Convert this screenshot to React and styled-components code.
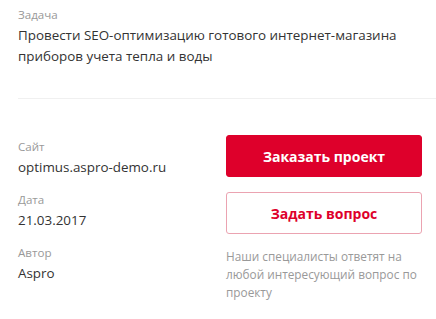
import React from 'react';
import styled, { createGlobalStyle } from 'styled-components';

const GlobalStyle = createGlobalStyle`
  body {
    margin: 0;
    background: #fff;
    font-family: "Open Sans", "Liberation Sans", sans-serif;
    color: #333;
  }
`;

const Wrapper = styled.div`
  width: 436px;
  padding: 6px 0 0 18px;
  box-sizing: border-box;
`;

const TaskBlock = styled.div`
  padding-bottom: 31px;
  border-bottom: 1px solid #f0f0f0;
`;

const Label = styled.div`
  font-size: 11.6px;
  line-height: 17px;
  color: #999;
`;

const Title = styled.div`
  font-size: 13.4px;
  line-height: 21px;
  color: #333;
  margin-top: 2px;
`;

const Details = styled.div`
  display: grid;
  grid-template-columns: 208px 196px;
  padding-top: 36px;
`;

const InfoList = styled.div`
  display: flex;
  flex-direction: column;
  gap: 13px;
  padding-top: 3px;
`;

const Value = styled.div`
  font-size: 13.4px;
  line-height: 21px;
  color: #333;
  margin-top: 2px;
`;

const Actions = styled.div`
  display: flex;
  flex-direction: column;
  gap: 15px;
`;

const Button = styled.button`
  height: 42px;
  border-radius: 3px;
  font-family: "Open Sans", "Liberation Sans", sans-serif;
  font-size: 14px;
  font-weight: 700;
  cursor: pointer;
  background: ${p => (p.$outline ? '#fff' : '#de002b')};
  color: ${p => (p.$outline ? '#de002b' : '#fff')};
  border: 1px solid ${p => (p.$outline ? '#eba3b1' : '#de002b')};
`;

const Note = styled.p`
  margin: -2px 0 0;
  font-size: 11.8px;
  line-height: 18px;
  color: #999;
`;

const info = [
  { label: 'Сайт', value: 'optimus.aspro-demo.ru' },
  { label: 'Дата', value: '21.03.2017' },
  { label: 'Автор', value: 'Aspro' },
];

export default function App() {
  return (
    <Wrapper>
      <GlobalStyle />
      <TaskBlock>
        <Label>Задача</Label>
        <Title>Провести SEO-оптимизацию готового интернет-магазина приборов учета тепла и воды</Title>
      </TaskBlock>
      <Details>
        <InfoList>
          {info.map(item => (
            <div key={item.label}>
              <Label>{item.label}</Label>
              <Value>{item.value}</Value>
            </div>
          ))}
        </InfoList>
        <Actions>
          <Button>Заказать проект</Button>
          <Button $outline>Задать вопрос</Button>
          <Note>Наши специалисты ответят на любой интересующий вопрос по проекту</Note>
        </Actions>
      </Details>
    </Wrapper>
  );
}
